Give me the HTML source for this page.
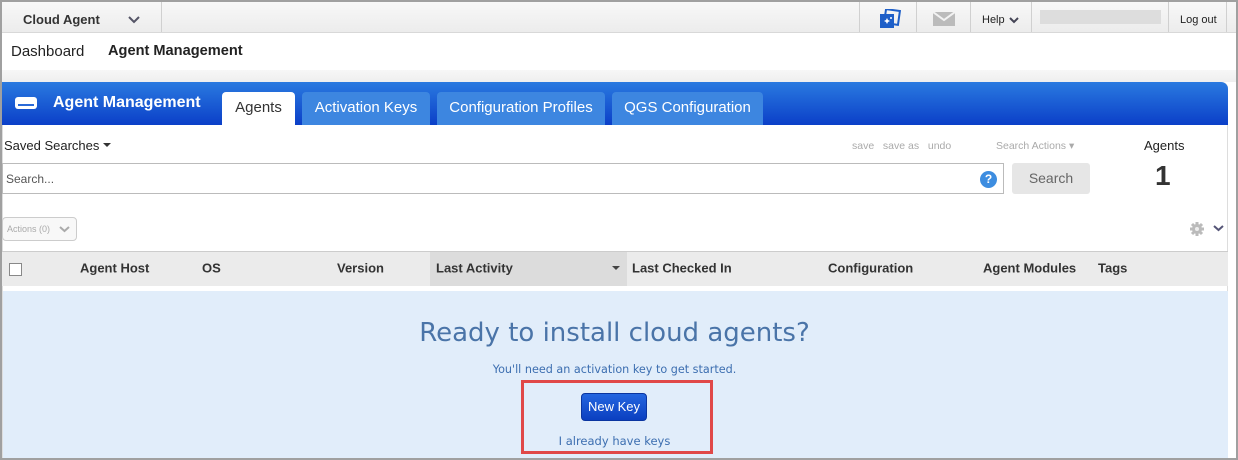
<!DOCTYPE html>
<html><head><style>
*{box-sizing:border-box;margin:0;padding:0}
body{width:1238px;height:460px;overflow:hidden;background:#fff;font-family:"Liberation Sans",Arial,sans-serif;position:relative}
.a{position:absolute}
.frame{left:0;top:0;width:1238px;height:460px;border:2px solid #a0a0a0;border-bottom:none}
.top{left:2px;top:2px;width:1234px;height:31px;background:linear-gradient(#f8f8f8,#ececec);border-bottom:1px solid #d8d8d8}
.sep{top:2px;width:1px;height:30px;background:#d0d0d0}
.t{white-space:nowrap}
.tab{top:92px;height:33px;border-radius:4px 4px 0 0;background:#3d86e0;color:#fff;font-size:15px;text-align:center;line-height:32px}
.th{top:268px;font-size:13px;font-weight:bold;color:#333;transform:translateY(-50%)}
</style></head><body>
<div class="a top"></div>
<div class="a t" style="left:23px;top:12px;font-size:13px;font-weight:bold;color:#333">Cloud Agent</div>
<svg class="a" style="left:128px;top:16px" width="12" height="8"><path d="M1 1l5 5 5-5" stroke="#556" stroke-width="2" fill="none"/></svg>
<div class="a sep" style="left:161px"></div>
<div class="a sep" style="left:859px"></div>
<div class="a sep" style="left:916px"></div>
<div class="a sep" style="left:970px"></div>
<div class="a sep" style="left:1031px"></div>
<div class="a sep" style="left:1168px"></div>
<div class="a sep" style="left:1226px"></div>
<svg class="a" style="left:879px;top:9px" width="22" height="20"><rect x="6" y="1" width="14" height="14" fill="none" stroke="#1e5fc8" stroke-width="2" transform="rotate(8 13 8)"/><rect x="1" y="5" width="14" height="14" fill="#1e5fc8"/><path d="M5 12l2-1 1-2 1 2 2 1-2 1-1 2-1-2z" fill="#fff"/><circle cx="12" cy="9" r="1" fill="#fff"/></svg>
<svg class="a" style="left:933px;top:12px" width="22" height="14"><rect width="22" height="14" fill="#bbb"/><path d="M0 0l11 8 11-8" stroke="#f2f2f2" stroke-width="2" fill="none"/></svg>
<div class="a t" style="left:982px;top:14px;font-size:11px;color:#222">Help</div>
<svg class="a" style="left:1009px;top:17px" width="10" height="7"><path d="M1 1l4 4 4-4" stroke="#445" stroke-width="2" fill="none"/></svg>
<div class="a" style="left:1040px;top:10px;width:121px;height:14px;background:#ddd"></div>
<div class="a t" style="left:1180px;top:14px;font-size:11px;color:#222">Log out</div>
<div class="a t" style="left:11px;top:43px;font-size:15px;color:#222">Dashboard</div>
<div class="a t" style="left:108px;top:43px;font-size:14.6px;font-weight:bold;color:#222">Agent Management</div>
<div class="a" style="left:2px;top:70px;width:1234px;height:12px;background:linear-gradient(#f7f7f7,#efefef)"></div>
<div class="a" style="left:2px;top:82px;width:1226px;height:378px;border:1px solid #ddd;border-top:none;border-radius:0 6px 0 0"></div>
<div class="a" style="left:2px;top:82px;width:1226px;height:43px;background:linear-gradient(#2a7ae0,#0b3fc8);border-radius:0 7px 0 0"></div>
<svg class="a" style="left:14px;top:96px" width="24" height="14"><rect x="1" y="1" width="22" height="12" rx="3" fill="#fff"/><rect x="4" y="8" width="16" height="2" fill="#2a6ad8"/></svg>
<div class="a t" style="left:53px;top:94px;font-size:16px;font-weight:bold;color:#fff">Agent Management</div>
<div class="a tab" style="left:222px;width:73px;background:#fff;color:#333">Agents</div>
<div class="a tab" style="left:302px;width:128px">Activation Keys</div>
<div class="a tab" style="left:437px;width:168px">Configuration Profiles</div>
<div class="a tab" style="left:612px;width:151px">QGS Configuration</div>
<div class="a t" style="left:4px;top:138px;font-size:13px;color:#222">Saved Searches</div>
<svg class="a" style="left:103px;top:143px" width="8" height="5"><path d="M0 0h8l-4 4z" fill="#333"/></svg>
<div class="a t" style="left:852px;top:140px;font-size:10.5px;color:#aaa">save &nbsp;&nbsp;save as &nbsp;&nbsp;undo</div>
<div class="a t" style="left:996px;top:140px;font-size:10.5px;color:#aaa">Search Actions ▾</div>
<div class="a t" style="left:1144px;top:138px;font-size:13px;color:#222">Agents</div>
<div class="a t" style="left:1155px;top:160px;font-size:28px;font-weight:bold;color:#333">1</div>
<div class="a" style="left:2px;top:163px;width:1002px;height:31px;border:1px solid #bbb;background:#fff"></div>
<div class="a t" style="left:6px;top:172px;font-size:12px;color:#555">Search...</div>
<div class="a" style="left:980px;top:171px;width:17px;height:17px;border-radius:50%;background:#3d8de0;color:#fff;font-size:12px;font-weight:bold;text-align:center;line-height:17px">?</div>
<div class="a" style="left:1012px;top:163px;width:78px;height:31px;background:#e6e6e6;border-radius:3px;color:#666;font-size:14px;text-align:center;line-height:31px">Search</div>
<div class="a" style="left:2px;top:217px;width:75px;height:24px;border:1px solid #ccc;border-radius:4px;background:#f8f8f8"></div>
<div class="a t" style="left:7px;top:224px;font-size:9px;color:#aaa">Actions (0)</div>
<svg class="a" style="left:59px;top:226px" width="11" height="7"><path d="M1 1l4.5 4 4.5-4" stroke="#aaa" stroke-width="2" fill="none"/></svg>
<svg class="a" style="left:1189px;top:221px" width="16" height="16"><circle cx="8" cy="8" r="5" fill="#bbb"/><g stroke="#bbb" stroke-width="3"><path d="M8 1v14M1 8h14M3 3l10 10M13 3L3 13"/></g><circle cx="8" cy="8" r="2" fill="#eee"/></svg>
<svg class="a" style="left:1213px;top:225px" width="11" height="7"><path d="M1 1l4.5 4 4.5-4" stroke="#557" stroke-width="2" fill="none"/></svg>
<div class="a" style="left:2px;top:251px;width:1226px;height:35px;background:#ebebeb;border-top:1px solid #ccc"></div>
<div class="a" style="left:430px;top:252px;width:197px;height:34px;background:#dcdcdc"></div>
<div class="a" style="left:9px;top:263px;width:13px;height:13px;border:1px solid #888;background:#fff"></div>
<div class="a th t" style="left:80px">Agent Host</div>
<div class="a th t" style="left:202px">OS</div>
<div class="a th t" style="left:337px">Version</div>
<div class="a th t" style="left:436px">Last Activity</div>
<svg class="a" style="left:612px;top:266px" width="8" height="5"><path d="M0 0h8l-4 4z" fill="#444"/></svg>
<div class="a th t" style="left:632px">Last Checked In</div>
<div class="a th t" style="left:828px">Configuration</div>
<div class="a th t" style="left:983px">Agent Modules</div>
<div class="a th t" style="left:1098px">Tags</div>
<div class="a" style="left:3px;top:291px;width:1225px;height:169px;background:#e1edfa"></div>
<div class="a t" style="left:0;width:1229px;text-align:center;top:318px;font-size:26px;color:#4a74a8;font-family:'DejaVu Sans',sans-serif">Ready to install cloud agents?</div>
<div class="a t" style="left:0;width:1229px;text-align:center;top:363px;font-size:11.2px;color:#3c6eb0;font-family:'DejaVu Sans',sans-serif">You'll need an activation key to get started.</div>
<div class="a" style="left:581px;top:393px;width:66px;height:28px;border-radius:4px;background:linear-gradient(#2466e0,#0b3fc0);border:1px solid #0a35a0;color:#fff;font-size:13px;text-align:center;line-height:26px">New Key</div>
<div class="a t" style="left:0;width:1229px;text-align:center;top:434px;font-size:11.5px;color:#3c6eb0;font-family:'DejaVu Sans',sans-serif">I already have keys</div>
<div class="a" style="left:521px;top:380px;width:192px;height:74px;border:3px solid #e04848"></div>
<div class="a" style="left:0;top:458px;width:1238px;height:2px;background:#a0a0a0"></div>
<div class="a frame"></div>
</body></html>
